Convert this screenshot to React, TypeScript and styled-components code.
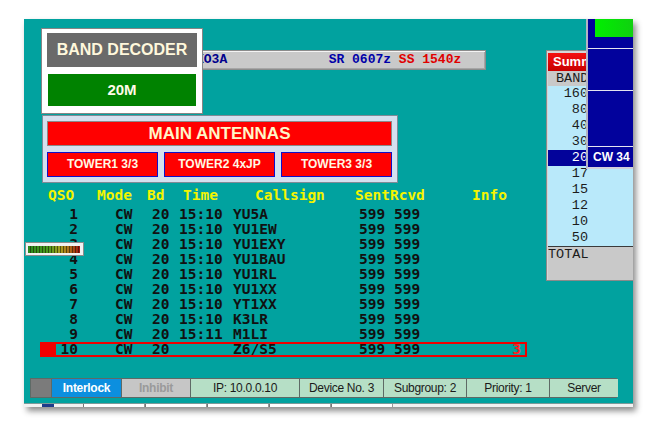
import React from "react";
import styled, { createGlobalStyle } from "styled-components";

const GlobalStyle = createGlobalStyle`
  html, body { margin: 0; padding: 0; background: #ffffff; }
  body { font-family: "Liberation Sans", Arial, sans-serif; }
`;

const TEAL = "#01a29f";

const Desktop = styled.div`
  width: 652px;
  height: 431px;
  padding: 19px 0 0 24px;
  box-sizing: border-box;
  overflow: hidden;
`;

const MainWindow = styled.div`
  position: relative;
  width: 609px;
  height: 388px;
  background: ${TEAL};
  overflow: hidden;
  box-shadow: 3px 4px 6px rgba(0, 0, 0, 0.45);
  display: flex;
  flex-direction: column;
`;

const InfoBar = styled.div`
  margin: 31px 0 0 156px;
  width: 306px;
  height: 20px;
  box-sizing: border-box;
  background: #c9c9c9;
  border: 1px solid #8c8c8c;
  box-shadow: inset 1px 1px #f4f4f4, inset -1px -1px #a6a6a6;
  padding-left: 15px;
  font-family: "Liberation Mono", "Courier New", monospace;
  font-weight: bold;
  font-size: 13px;
  line-height: 18px;
  white-space: pre;
`;

const InfoText = styled.span<{ $c: string }>`
  color: ${(p) => p.$c};
`;

const LogTable = styled.div`
  margin: 118px 0 0 16px;
  width: 487px;
  font-family: "DejaVu Sans Mono", "Liberation Mono", monospace;
  font-weight: bold;
  font-size: 14.5px;
  line-height: 15px;
`;

const HeaderRow = styled.div`
  display: grid;
  grid-template-columns: 49px 50px 36px 72px 100px 117px auto;
  padding-left: 8px;
  height: 15px;
  color: #f4f400;
  margin-bottom: 4px;
  white-space: pre;
`;

const Row = styled.div<{ $sel?: boolean }>`
  display: grid;
  grid-template-columns: 75px 37px 27px 54px 126px 35px 36px 91px;
  height: 15px;
  color: #111111;
  white-space: pre;
  ${(p) =>
    p.$sel
      ? `outline: 2px solid #f00000; outline-offset: -2px;
         background: linear-gradient(to right, #f00000 16px, transparent 16px);`
      : ""}
`;

const QsoCell = styled.span`
  text-align: right;
  padding-right: 37px;
`;

const InfoCell = styled.span`
  text-align: right;
  color: #ff2020;
`;

const StatusBar = styled.div`
  margin: 21px 0 0 6px;
  display: grid;
  grid-template-columns: 20px 70px 69px 109px 84px 83px 83px 69px;
  width: 587px;
  height: 20px;
  box-sizing: border-box;
  border: 1px solid #5e6a66;
  font-family: "Liberation Sans", Arial, sans-serif;
  font-size: 12px;
  letter-spacing: -0.3px;
  line-height: 18px;
`;

const StatusCell = styled.div<{ $kind?: "grip" | "on" | "off" | "info" }>`
  text-align: center;
  border-left: 1px solid #5e6a66;
  &:first-child { border-left: none; }
  background: ${(p) =>
    p.$kind === "grip"
      ? "#7b7b7b"
      : p.$kind === "on"
      ? "#0c8fdf"
      : p.$kind === "off"
      ? "#c6c6c6"
      : "#b6dfc6"};
  color: ${(p) => (p.$kind === "on" ? "#ffffff" : p.$kind === "off" ? "#9a9a9a" : "#1a1a1a")};
  font-weight: ${(p) => (p.$kind === "on" || p.$kind === "off" ? "bold" : "normal")};
`;

const BottomEdge = styled.div`
  margin-top: auto;
  height: 4px;
  background: #f2f2f2;
  border-top: 1px solid #7a9a9a;
  box-sizing: border-box;
  display: flex;
  padding-left: 18px;
`;

const EdgeKnob = styled.div`
  width: 12px;
  height: 3px;
  background: #1f3c8a;
  margin-right: 29px;
`;

const EdgeTab = styled.div`
  width: 60px;
  height: 3px;
  border-left: 1px solid #777;
  border-right: 1px solid #999;
  background: #ffffff;
`;

/* ---- floating windows ---- */

const Floating = styled.div<{ $x: number; $y: number }>`
  position: absolute;
  left: ${(p) => p.$x}px;
  top: ${(p) => p.$y}px;
`;

const DecoderWin = styled(Floating)`
  width: 162px;
  height: 86px;
  box-sizing: border-box;
  background: #ffffff;
  border: 1px solid #858585;
  padding: 4px 5px 0 5px;
  display: flex;
  flex-direction: column;
  gap: 7px;
  font-family: "Liberation Sans", Arial, sans-serif;
  font-weight: bold;
`;

const DecoderTitle = styled.div`
  height: 34px;
  background: #6a6a6a;
  color: #fff8dc;
  font-size: 16px;
  line-height: 34px;
  text-align: center;
`;

const DecoderBand = styled.div`
  height: 32px;
  margin: 0 1px;
  background: #008200;
  color: #fffbe8;
  font-size: 15px;
  line-height: 32px;
  text-align: center;
`;

const AntennaWin = styled(Floating)`
  width: 356px;
  height: 68px;
  box-sizing: border-box;
  background: #d5e0ef;
  border: 1px solid #7f8a96;
  padding: 5px 5px 0 4px;
  display: flex;
  flex-direction: column;
  gap: 6px;
  font-family: "Liberation Sans", Arial, sans-serif;
  font-weight: bold;
`;

const AntennaTitle = styled.div`
  height: 25px;
  box-sizing: border-box;
  background: #ff0000;
  border: 1px solid #8a8a8a;
  color: #fff6c8;
  font-size: 17px;
  line-height: 23px;
  text-align: center;
`;

const TowerRow = styled.div`
  display: grid;
  grid-template-columns: repeat(3, 111px);
  gap: 6px;
`;

const TowerButton = styled.div`
  height: 25px;
  box-sizing: border-box;
  background: #ff0000;
  border: 1px solid #1010c8;
  color: #fff8e4;
  font-size: 12px;
  line-height: 23px;
  text-align: center;
`;

const SummaryWin = styled(Floating)`
  width: 100px;
  height: 231px;
  box-sizing: border-box;
  background: #d6d6d6;
  border: 1px solid #8a8a8a;
  padding: 2px 0 0 1px;
  display: flex;
  flex-direction: column;
`;

const SummaryHead = styled.div`
  height: 18px;
  background: linear-gradient(#f41010, #c80000);
  color: #ffffff;
  font-family: "Liberation Sans", Arial, sans-serif;
  font-weight: bold;
  font-size: 13px;
  line-height: 18px;
  padding-left: 5px;
`;

const SummaryRow = styled.div<{ $tone: "head" | "body" | "sel" | "total" }>`
  display: grid;
  grid-template-columns: 42px 1fr;
  height: ${(p) => (p.$tone === "head" ? 15 : p.$tone === "total" ? 33 : 16)}px;
  font-family: "Liberation Mono", "Courier New", monospace;
  font-size: 13.5px;
  line-height: ${(p) => (p.$tone === "head" ? 15 : 16)}px;
  background: ${(p) =>
    p.$tone === "head" || p.$tone === "total" ? "#c9c9c9" : p.$tone === "sel" ? "#03039a" : "#b9e9fa"};
  color: ${(p) => (p.$tone === "sel" ? "#ffffff" : "#1c1c1c")};
  ${(p) => (p.$tone === "total" ? "border-top: 1px solid #3a3a3a;" : "")}
`;

const BandNum = styled.span`
  text-align: right;
  padding-right: 2px;
`;

const BandLabel = styled.span<{ $pad: number }>`
  padding-left: ${(p) => p.$pad}px;
`;

const BandMapWin = styled(Floating)`
  width: 47px;
  height: 150px;
  box-sizing: border-box;
  background: #02029c;
  border-left: 2px solid #b4b4c4;
  border-bottom: 2px solid #d0d0dc;
  display: flex;
  flex-direction: column;
`;

const MapSection = styled.div<{ $h: number }>`
  height: ${(p) => p.$h}px;
  border-bottom: 1px solid #e4e4f0;
  padding-left: 7px;
`;

const GreenBlock = styled.div`
  height: 18px;
  background: linear-gradient(to right, #00f000, #10d010);
`;

const MapSpot = styled.div`
  flex: 1;
  color: #ffffff;
  font-family: "Liberation Sans", Arial, sans-serif;
  font-weight: bold;
  font-size: 12px;
  line-height: 20px;
  padding-left: 5px;
  white-space: pre;
`;

const MeterWin = styled(Floating)`
  width: 59px;
  height: 14px;
  box-sizing: border-box;
  background: #f2f2f2;
  border: 1px solid #8c8c8c;
  padding: 3px 3px 2px 2px;
`;

const MeterBar = styled.div`
  height: 100%;
  background:
    repeating-linear-gradient(to right, transparent 0 2px, rgba(20, 20, 0, 0.55) 2px 3px),
    linear-gradient(to right, #2a8a1e 0%, #4a9a1e 40%, #a8a020 62%, #b06a18 80%, #a01010 100%);
`;

const qsos: [string, string, string][] = [
  ["1", "15:10", "YU5A"],
  ["2", "15:10", "YU1EW"],
  ["3", "15:10", "YU1EXY"],
  ["4", "15:10", "YU1BAU"],
  ["5", "15:10", "YU1RL"],
  ["6", "15:10", "YU1XX"],
  ["7", "15:10", "YT1XX"],
  ["8", "15:10", "K3LR"],
  ["9", "15:11", "M1LI"],
];

const bands = ["160", "80", "40", "30", "20", "17", "15", "12", "10", "50"];

const statusCells: { t: string; k: "grip" | "on" | "off" | "info" }[] = [
  { t: "", k: "grip" },
  { t: "Interlock", k: "on" },
  { t: "Inhibit", k: "off" },
  { t: "IP: 10.0.0.10", k: "info" },
  { t: "Device No. 3", k: "info" },
  { t: "Subgroup: 2", k: "info" },
  { t: "Priority: 1", k: "info" },
  { t: "Server", k: "info" },
];

export default function App() {
  return (
    <>
      <GlobalStyle />
      <Desktop>
        <MainWindow>
          <InfoBar>
            <InfoText $c="#00008c">{"KO3A             "}</InfoText>
            <InfoText $c="#0000a8">{"SR 0607z "}</InfoText>
            <InfoText $c="#e00000">{"SS 1540z"}</InfoText>
          </InfoBar>

          <LogTable>
            <HeaderRow>
              <span>QSO</span>
              <span>Mode</span>
              <span>Bd</span>
              <span>Time</span>
              <span>Callsign</span>
              <span>SentRcvd</span>
              <span>Info</span>
            </HeaderRow>
            {qsos.map(([n, t, c]) => (
              <Row key={n}>
                <QsoCell>{n}</QsoCell>
                <span>CW</span>
                <span>20</span>
                <span>{t}</span>
                <span>{c}</span>
                <span>599</span>
                <span>599</span>
                <InfoCell />
              </Row>
            ))}
            <Row $sel>
              <QsoCell>10</QsoCell>
              <span>CW</span>
              <span>20</span>
              <span></span>
              <span>Z6/S5</span>
              <span>599</span>
              <span>599</span>
              <InfoCell>3</InfoCell>
            </Row>
          </LogTable>

          <StatusBar>
            {statusCells.map((s, i) => (
              <StatusCell key={i} $kind={s.k}>
                {s.t}
              </StatusCell>
            ))}
          </StatusBar>

          <BottomEdge>
            <EdgeKnob />
            <EdgeTab />
            <EdgeTab />
            <EdgeTab />
            <EdgeTab />
            <EdgeTab />
          </BottomEdge>

          <MeterWin $x={1} $y={223}>
            <MeterBar />
          </MeterWin>

          <SummaryWin $x={522} $y={31}>
            <SummaryHead>Summary</SummaryHead>
            <SummaryRow $tone="head">
              <BandLabel $pad={8}>BAND</BandLabel>
              <span />
            </SummaryRow>
            {bands.map((b) => (
              <SummaryRow key={b} $tone={b === "20" ? "sel" : "body"}>
                <BandNum>{b}</BandNum>
                <span />
              </SummaryRow>
            ))}
            <SummaryRow $tone="total">
              <BandLabel $pad={0}>TOTAL</BandLabel>
              <span />
            </SummaryRow>
          </SummaryWin>

          <BandMapWin $x={562} $y={0}>
            <MapSection $h={29}>
              <GreenBlock />
            </MapSection>
            <MapSection $h={42} />
            <MapSection $h={56} />
            <MapSpot>{"CW 34"}</MapSpot>
          </BandMapWin>

          <DecoderWin $x={17} $y={9}>
            <DecoderTitle>BAND DECODER</DecoderTitle>
            <DecoderBand>20M</DecoderBand>
          </DecoderWin>

          <AntennaWin $x={18} $y={96}>
            <AntennaTitle>MAIN ANTENNAS</AntennaTitle>
            <TowerRow>
              <TowerButton>TOWER1 3/3</TowerButton>
              <TowerButton>TOWER2 4xJP</TowerButton>
              <TowerButton>TOWER3 3/3</TowerButton>
            </TowerRow>
          </AntennaWin>
        </MainWindow>
      </Desktop>
    </>
  );
}
